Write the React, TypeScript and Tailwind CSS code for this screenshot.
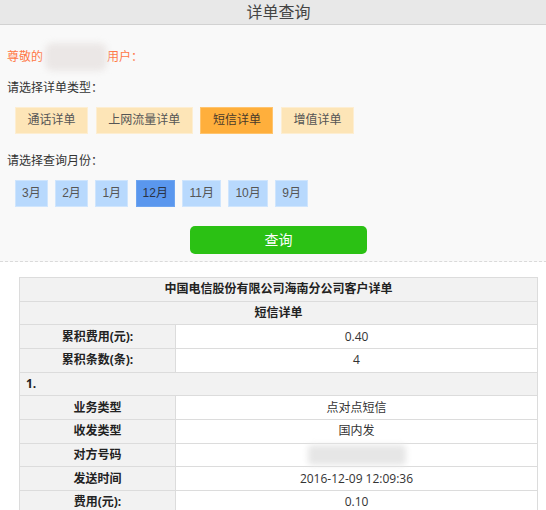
import React from "react";

const types = ["通话详单", "上网流量详单", "短信详单", "增值详单"];
const months = ["3月", "2月", "1月", "12月", "11月", "10月", "9月"];

const rows: { k: string; v: React.ReactNode }[] = [
  { k: "业务类型", v: "点对点短信" },
  { k: "收发类型", v: "国内发" },
  { k: "对方号码", v: <span className="inline-block w-[98px] h-[20px] bg-[#e6e6e6] blur-[3px] rounded" /> },
  { k: "发送时间", v: "2016-12-09 12:09:36" },
  { k: "费用(元):", v: "0.10" },
];

function KV({ k, v }: { k: string; v: React.ReactNode }) {
  return (
    <div className="flex h-[23.66px] border-b border-[#dcdcdc]">
      <div className="w-[156px] shrink-0 bg-[#f2f2f2] border-r border-[#dcdcdc] flex items-center justify-center font-bold text-[#222]">
        {k}
      </div>
      <div className="flex-1 bg-white flex items-center justify-center text-[#333]">{v}</div>
    </div>
  );
}

export default function App() {
  return (
    <div className="w-[546px] h-[510px] overflow-hidden bg-white font-['Open_Sans','Noto_Sans_CJK_SC',sans-serif] text-[12px] leading-[18px]">
      <div className="w-[557px]">
        <div className="h-[25px] bg-[#e8e8e8] border-b border-[#d2d2d2] flex items-center justify-center text-[16px] text-[#444] pb-[1px]">
          详单查询
        </div>
        <div className="bg-[#f9f9f9] border-b border-dashed border-[#dadada] px-[7px] pt-[22.7px] pb-[7px]">
          <div className="flex items-center text-[#ff7745] h-[18px]">
            <span>尊敬的</span>
            <span className="relative w-[64px] h-[18px]">
              <span className="absolute left-[2px] top-[-5px] w-[62px] h-[28px] bg-[#ebe7e6] blur-[3px] rounded-[8px]" />
            </span>
            <span>用户：</span>
          </div>
          <div className="mt-[13.6px] text-[#333]">请选择详单类型：</div>
          <div className="mt-[9.4px] ml-[8px] flex gap-[7.7px]">
            {types.map((t) => (
              <div
                key={t}
                className={
                  t === "短信详单"
                    ? "h-[27px] px-[11.5px] border border-[#ffc46e] bg-[#ffaf3c] text-[#4a3a2a] flex items-center"
                    : "h-[27px] px-[11.5px] border border-[#fdeed2] bg-[#fde5b7] text-[#555] flex items-center"
                }
              >
                {t}
              </div>
            ))}
          </div>
          <div className="mt-[18.7px] text-[#333]">请选择查询月份：</div>
          <div className="mt-[9.3px] ml-[8px] flex gap-[7.5px] font-['Liberation_Sans','Noto_Sans_CJK_SC',sans-serif]">
            {months.map((m) => (
              <div
                key={m}
                className={
                  m === "12月"
                    ? "h-[27px] px-[6px] border border-[#6ea5f0] bg-[#5a97ee] text-[#2a3344] flex items-center"
                    : "h-[27px] px-[6px] border border-[#cfe5fd] bg-[#b8d9fd] text-[#555] flex items-center"
                }
              >
                {m}
              </div>
            ))}
          </div>
          <div className="mt-[19px] flex justify-center">
            <div className="w-[177px] h-[28px] rounded-[5px] bg-[#2bc114] text-white text-[14px] flex items-center justify-center">
              查询
            </div>
          </div>
        </div>
        <div className="mt-[15.5px] ml-[19px] w-[519px] border-t border-x border-[#dcdcdc]">
          <div className="h-[23.66px] border-b border-[#dcdcdc] bg-[#f2f2f2] flex items-center justify-center font-bold text-[#222]">
            中国电信股份有限公司海南分公司客户详单
          </div>
          <div className="h-[23.66px] border-b border-[#dcdcdc] bg-[#f2f2f2] flex items-center justify-center font-bold text-[#222]">
            短信详单
          </div>
          <KV k="累积费用(元):" v="0.40" />
          <KV k="累积条数(条):" v="4" />
          <div className="h-[23.66px] border-b border-[#dcdcdc] bg-[#f2f2f2] flex items-center px-[6px] font-bold text-[#222]">
            1.
          </div>
          {rows.map((r) => (
            <KV key={r.k} k={r.k} v={r.v} />
          ))}
        </div>
      </div>
    </div>
  );
}
